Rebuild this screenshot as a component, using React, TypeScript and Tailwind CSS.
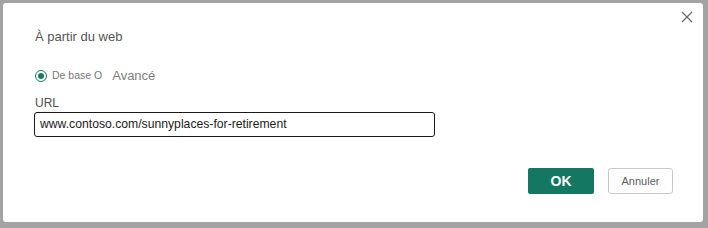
import React from 'react';

const App: React.FC = () => {
  return (
    <div className="w-[708px] h-[228px] bg-[#a3a3a3] pt-[3px] pl-[3px] overflow-hidden" style={{ fontFamily: '"Liberation Sans", Arial, sans-serif' }}>
      <div className="relative w-[700px] h-[219px] bg-white rounded-[3px] flex flex-col pl-[31px] pr-[30px]">
        {/* Close */}
        <button className="absolute right-[10px] top-[8px] w-[12px] h-[12px] flex items-center justify-center">
          <svg width="12" height="12" viewBox="0 0 12 12">
            <path d="M1 1 L11 11 M11 1 L1 11" stroke="#6b6b6b" strokeWidth="1.3" fill="none" />
          </svg>
        </button>

        <h1 className="mt-[25px] ml-[1px] text-[13px] leading-[18px] text-[#555] font-normal">À partir du web</h1>

        <div className="mt-[23px] flex items-center h-[14px]">
          <span className="ml-[1px] w-[12px] h-[12px] rounded-full border-[1.5px] border-[#147a62] flex items-center justify-center">
            <span className="w-[6px] h-[6px] rounded-full bg-[#147a62]" />
          </span>
          <span className="ml-[5px] text-[10.5px] text-[#777]">De base O</span>
          <span className="ml-[10px] text-[13px] text-[#808080]">Avancé</span>
        </div>

        <label className="mt-[12px] ml-[1px] text-[12px] leading-[16px] text-[#505050]">URL</label>
        <div className="mt-[1px] w-[401px] h-[25px] border border-[#1a1a1a] rounded-[3px] flex items-center px-[5px]">
          <span className="text-[12.2px] text-[#222]">www.contoso.com/sunnyplaces-for-retirement</span>
        </div>

        <div className="mt-[31px] flex justify-end gap-[14px]">
          <button className="w-[66px] h-[26px] rounded-[2px] bg-[#137761] text-white text-[14px] font-bold">OK</button>
          <button className="w-[65px] h-[26px] rounded-[3px] border border-[#c8c8c8] bg-white text-[11px] text-[#606060]">Annuler</button>
        </div>
      </div>
    </div>
  );
};

export default App;
